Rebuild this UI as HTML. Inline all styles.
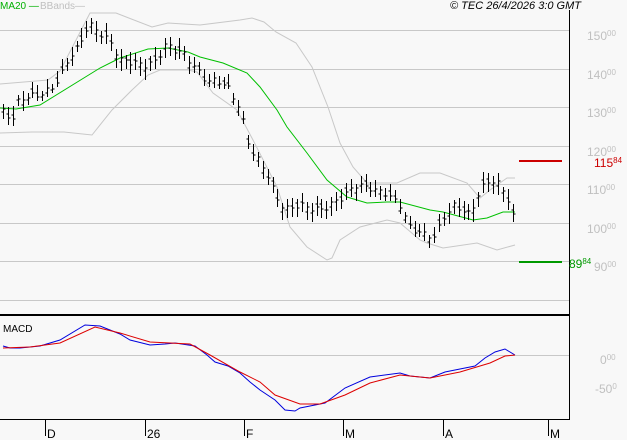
<!DOCTYPE html>
<html><head><meta charset="utf-8"><style>
html,body{margin:0;padding:0;background:#f8f8f8;}
svg{display:block;font-family:"Liberation Sans",sans-serif;}
</style></head><body>
<svg id="s" width="627" height="440" xmlns="http://www.w3.org/2000/svg">
<rect width="627" height="440" fill="#f8f8f8"/>
<g stroke="#c8c8c8" stroke-width="1">
<line x1="0" y1="30.5" x2="569" y2="30.5"/>
<line x1="0" y1="69.5" x2="569" y2="69.5"/>
<line x1="0" y1="107.5" x2="569" y2="107.5"/>
<line x1="0" y1="146.5" x2="569" y2="146.5"/>
<line x1="0" y1="184.5" x2="569" y2="184.5"/>
<line x1="0" y1="223.5" x2="569" y2="223.5"/>
<line x1="0" y1="261.5" x2="569" y2="261.5"/>
<line x1="0" y1="300.5" x2="569" y2="300.5"/>
<line x1="0" y1="355.5" x2="569" y2="355.5"/>
</g>
<line x1="569.5" y1="10" x2="569.5" y2="420" stroke="#000"/>
<line x1="0" y1="315" x2="569" y2="315" stroke="#000" stroke-width="2"/>
<line x1="0" y1="419.5" x2="569" y2="419.5" stroke="#000"/>
<g stroke="#000">
<line x1="45.5" y1="419" x2="45.5" y2="436"/>
<line x1="145.5" y1="419" x2="145.5" y2="436"/>
<line x1="244.5" y1="419" x2="244.5" y2="436"/>
<line x1="343.5" y1="419" x2="343.5" y2="436"/>
<line x1="443.5" y1="419" x2="443.5" y2="436"/>
<line x1="548.5" y1="419" x2="548.5" y2="436"/>
</g>
<g font-size="12" fill="#000">
<text x="47" y="438">D</text><text x="147" y="438">26</text><text x="246" y="438">F</text>
<text x="345" y="438">M</text><text x="445" y="438">A</text><text x="550" y="438">M</text>
</g>
<g font-size="12" fill="#c0c0c0">
<text x="587" y="40">150<tspan font-size="8" dy="-4">00</tspan></text>
<text x="587" y="79">140<tspan font-size="8" dy="-4">00</tspan></text>
<text x="587" y="117">130<tspan font-size="8" dy="-4">00</tspan></text>
<text x="587" y="156">120<tspan font-size="8" dy="-4">00</tspan></text>
<text x="587" y="194">110<tspan font-size="8" dy="-4">00</tspan></text>
<text x="587" y="233">100<tspan font-size="8" dy="-4">00</tspan></text>
<text x="594" y="271">90<tspan font-size="8" dy="-4">00</tspan></text>
<text x="600" y="364">0<tspan font-size="8" dy="-4">00</tspan></text>
<text x="595" y="393">-50<tspan font-size="8" dy="-4">0</tspan></text>
</g>
<line x1="519" y1="161" x2="562" y2="161" stroke="#cc0000" stroke-width="2"/>
<text x="594" y="167" font-size="12" fill="#cc0000">115<tspan font-size="8" dy="-4">84</tspan></text>
<line x1="519" y1="262" x2="562" y2="262" stroke="#009900" stroke-width="2"/>
<text x="569" y="268" font-size="12" fill="#009900">89<tspan font-size="8" dy="-4">84</tspan></text>
<text x="0" y="9" font-size="10" fill="#00b000">MA20 —</text>
<text x="40" y="9" font-size="10" fill="#c0c0c0">BBands—</text>
<text x="450" y="9" font-size="11" font-style="italic" fill="#000">© TEC 26/4/2026 3:0 GMT</text>
<text x="3" y="332" font-size="10" fill="#000">MACD</text>
<g id="plot"></g>
</svg>
<script>
function interp(pts,x){for(var i=0;i<pts.length-1;i++){if(x<=pts[i+1][0]){var a=pts[i],b=pts[i+1];return a[1]+(b[1]-a[1])*(x-a[0])/(b[0]-a[0]);}}return pts[pts.length-1][1];}
var g=document.getElementById('plot'),NS='http://www.w3.org/2000/svg';
function pl(pts,col){var d=pts.map(function(p){return p[0]+','+p[1];}).join(' ');var e=document.createElementNS(NS,'polyline');e.setAttribute('points',d);e.setAttribute('fill','none');e.setAttribute('stroke',col);e.setAttribute('stroke-width','1');g.appendChild(e);}
pl([[0,84],[48,80],[60,71],[90,13],[116,13],[152,27],[168,23],[200,25],[240,20],[252,18],[264,22],[276,32],[296,43],[312,67],[328,107],[340,143],[353,167],[367,183],[397,183],[420,173],[440,173],[467,183],[480,198],[490,190],[507,178],[515,178]],'#c8c8c8');
pl([[0,133],[32,132],[64,132],[92,135],[112,110],[132,90],[148,75],[160,70],[188,70],[197,72],[213,93],[237,110],[253,140],[277,187],[290,227],[307,247],[327,260],[332,258],[340,240],[360,227],[387,220],[400,223],[420,240],[427,243],[443,248],[477,243],[497,250],[515,245]],'#c8c8c8');
pl([[0,108],[16,109],[40,105],[100,68],[120,58],[148,49],[168,48],[188,52],[200,57],[223,63],[247,73],[260,87],[277,110],[287,127],[307,153],[327,180],[347,197],[367,203],[387,202],[400,202],[430,210],[443,212],[473,220],[487,218],[503,212],[515,212]],'#00c000');
var cl=[[3,112],[15,120],[18,100],[25,97],[40,95],[50,90],[60,77],[70,55],[80,45],[85,30],[90,25],[100,33],[110,42],[120,60],[135,63],[145,65],[155,62],[165,45],[175,50],[185,55],[195,67],[205,80],[220,82],[230,90],[240,110],[250,150],[265,170],[275,195],[285,210],[300,205],[320,210],[330,205],[345,195],[355,185],[370,188],[385,193],[400,205],[410,228],[425,235],[435,237],[445,215],[455,205],[462,210],[470,215],[480,190],[490,180],[500,185],[508,200],[515,225]];
var s='';for(var x=3;x<=516;x+=4.9){var c=interp(cl,x)+Math.sin(x*1.7)*3;var o=c+Math.sin(x*2.3)*5;var h=Math.min(o,c)-3-Math.abs(Math.sin(x*0.9))*6;var l=Math.max(o,c)+3+Math.abs(Math.cos(x*1.3))*6;var xx=Math.round(x)+0.5;s+='M'+xx+' '+h.toFixed(0)+'V'+l.toFixed(0)+'M'+(xx-2)+' '+o.toFixed(0)+'h2M'+xx+' '+c.toFixed(0)+'h2';}
var b=document.createElementNS(NS,'path');b.setAttribute('d',s);b.setAttribute('stroke','#000');b.setAttribute('fill','none');g.appendChild(b);
pl([[3,346],[10,348],[20,348],[40,346],[60,340],[85,325],[100,326],[120,334],[130,340],[150,345],[165,344],[175,343],[195,346],[207,355],[215,362],[228,366],[240,373],[250,382],[260,390],[275,400],[285,410],[295,411],[300,408],[325,403],[345,388],[370,377],[400,373],[410,376],[430,378],[445,372],[460,369],[475,366],[485,358],[495,352],[505,349],[515,355]],'#0000dd');
pl([[3,348],[30,347],[60,343],[95,327],[120,333],[150,342],[190,344],[210,355],[240,372],[260,382],[275,395],[300,404],[320,404],[345,395],[370,383],[400,375],[430,378],[460,372],[490,363],[505,356],[515,355]],'#dd0000');
</script>
</body></html>
